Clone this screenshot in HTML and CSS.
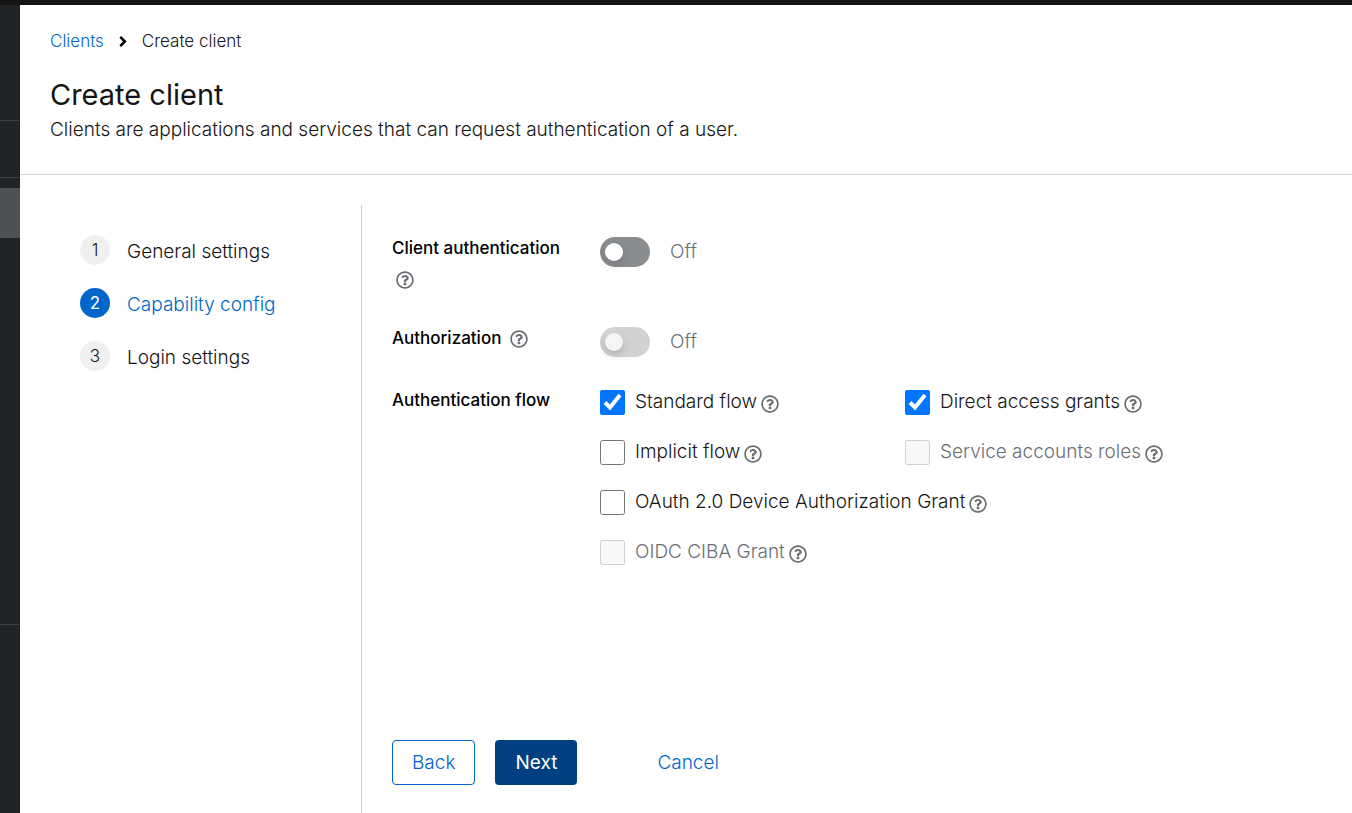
FILE: index.html
```html
<!DOCTYPE html>
<html lang="en">
<head>
<meta charset="utf-8">
<meta name="viewport" content="width=device-width, initial-scale=1">
<title>Create client</title>
<link rel="stylesheet" href="styles.css">
</head>
<body>
<svg class="sprite" aria-hidden="true">
  <symbol id="help" viewBox="0 0 512 512"><path d="M256 8C119.043 8 8 119.083 8 256c0 136.997 111.043 248 248 248s248-111.003 248-248C504 119.083 392.957 8 256 8zm0 448c-110.532 0-200-89.431-200-200 0-110.495 89.472-200 200-200 110.491 0 200 89.471 200 200 0 110.53-89.431 200-200 200zm107.244-255.2c0 67.052-72.421 68.084-72.421 92.863V300c0 6.627-5.373 12-12 12h-45.647c-6.627 0-12-5.373-12-12v-8.659c0-35.745 27.1-50.034 47.579-61.516 17.561-9.845 28.324-16.541 28.324-29.579 0-17.246-21.999-28.693-39.784-28.693-23.189 0-33.894 10.977-48.942 29.969-4.057 5.12-11.46 6.071-16.666 2.124l-27.824-21.098c-5.107-3.872-6.251-11.066-2.644-16.363C184.846 131.491 214.94 112 261.794 112c49.071 0 101.45 38.304 101.45 88.8zM298 368c0 23.159-18.841 42-42 42s-42-18.841-42-42 18.841-42 42-42 42 18.841 42 42z"/></symbol>
</svg>
<div class="topbar"></div>
<div class="shell">
  <aside class="sidebar">
    <div class="side-block side-block-first"></div>
    <div class="side-block side-block-second"></div>
    <div class="side-active"></div>
    <div class="side-block side-block-third"></div>
  </aside>
  <main class="page">
    <header class="page-header">
      <nav class="breadcrumb" aria-label="Breadcrumb">
        <a class="link" href="#clients">Clients</a>
        <svg class="chevron" viewBox="0 0 256 512" aria-hidden="true"><path d="M224.3 273l-136 136c-9.4 9.4-24.6 9.4-33.9 0l-22.6-22.6c-9.4-9.4-9.4-24.6 0-33.9l96.4-96.4-96.4-96.4c-9.4-9.4-9.4-24.6 0-33.9L54.3 103c9.4-9.4 24.6-9.4 33.9 0l136 136c9.5 9.4 9.5 24.6.1 34z"/></svg>
        <span>Create client</span>
      </nav>
      <h1 class="title">Create client</h1>
      <p class="subtitle">Clients are applications and services that can request authentication of a user.</p>
    </header>
    <div class="wizard">
      <nav class="steps" aria-label="Steps">
        <button class="step" type="button"><span class="step-number">1</span><span>General settings</span></button>
        <button class="step step-current" type="button" aria-current="step"><span class="step-number">2</span><span>Capability config</span></button>
        <button class="step" type="button"><span class="step-number">3</span><span>Login settings</span></button>
      </nav>
      <form class="content">
        <div class="fields">
          <div class="row row-tall">
            <div class="row-label"><label for="client-auth">Client authentication</label> <button class="help help-label" type="button" aria-label="Help for client authentication"><svg class="help-icon"><use href="#help"/></svg></button></div>
            <div class="switch-line"><input class="switch" id="client-auth" type="checkbox" role="switch"><span>Off</span></div>
          </div>
          <div class="row">
            <div class="row-label"><label for="authorization">Authorization</label> <button class="help help-label" type="button" aria-label="Help for authorization"><svg class="help-icon"><use href="#help"/></svg></button></div>
            <div class="switch-line"><input class="switch" id="authorization" type="checkbox" role="switch" disabled><span>Off</span></div>
          </div>
          <div class="row" role="group" aria-labelledby="flow-label">
            <div class="row-label" id="flow-label">Authentication flow</div>
            <div class="checks">
              <div class="check"><input class="box" id="standard" type="checkbox" checked><label for="standard">Standard flow</label><button class="help" type="button" aria-label="Help for standard flow"><svg class="help-icon"><use href="#help"/></svg></button></div>
              <div class="check"><input class="box" id="direct" type="checkbox" checked><label for="direct">Direct access grants</label><button class="help" type="button" aria-label="Help for direct access grants"><svg class="help-icon"><use href="#help"/></svg></button></div>
              <div class="check"><input class="box" id="implicit" type="checkbox"><label for="implicit">Implicit flow</label><button class="help" type="button" aria-label="Help for implicit flow"><svg class="help-icon"><use href="#help"/></svg></button></div>
              <div class="check check-disabled"><input class="box" id="service" type="checkbox" disabled><label for="service">Service accounts roles</label><button class="help" type="button" aria-label="Help for service accounts roles"><svg class="help-icon"><use href="#help"/></svg></button></div>
              <div class="check check-wide"><input class="box" id="device" type="checkbox"><label for="device">OAuth 2.0 Device Authorization Grant</label><button class="help" type="button" aria-label="Help for device authorization grant"><svg class="help-icon"><use href="#help"/></svg></button></div>
              <div class="check check-wide check-disabled"><input class="box" id="ciba" type="checkbox" disabled><label for="ciba">OIDC CIBA Grant</label><button class="help" type="button" aria-label="Help for OIDC CIBA grant"><svg class="help-icon"><use href="#help"/></svg></button></div>
            </div>
          </div>
        </div>
        <footer class="actions">
          <button class="btn btn-secondary" type="button">Back</button>
          <button class="btn btn-primary" type="button">Next</button>
          <button class="btn btn-link" type="button">Cancel</button>
        </footer>
      </form>
    </div>
  </main>
</div>
</body>
</html>
```
FILE: styles.css
```css
* {
  box-sizing: border-box;
}

body {
  margin: 0;
  min-height: 100vh;
  display: flex;
  flex-direction: column;
  background: #fff;
  color: #151515;
  font: 300 19px/30px Inter, "Open Sans", sans-serif;
}

button {
  padding: 0;
  border: 0;
  background: none;
  color: inherit;
  font: inherit;
  cursor: pointer;
}

.sprite {
  display: none;
}

.topbar {
  height: 5px;
  background: #151515;
}

.shell {
  flex: 1;
  display: flex;
}

.sidebar {
  flex: none;
  width: 20px;
  background: #212427;
}

.side-block {
  border-bottom: 1px solid #3c3f42;
}

.side-block-first {
  height: 116px;
}

.side-block-second {
  height: 57px;
  margin-bottom: 10px;
}

.side-active {
  height: 50px;
  background: #4f5255;
}

.side-block-third {
  height: 387px;
}

.page {
  flex: 1;
  min-width: 0;
  display: flex;
  flex-direction: column;
}

.page-header {
  padding: 24px 30px 29px;
  border-bottom: 1px solid #d2d2d2;
}

.breadcrumb {
  display: flex;
  align-items: center;
  font-size: 17px;
  line-height: 24px;
}

.link {
  color: #06c;
  text-decoration: none;
}

.chevron {
  width: 10px;
  height: 17px;
  margin: 0 14px;
}

.title {
  margin: 22px 0 0;
  font-size: 29px;
  font-weight: 400;
  line-height: 40px;
}

.subtitle {
  margin: 0;
}

.wizard {
  flex: 1;
  display: flex;
  padding-top: 30px;
}

.steps {
  flex: none;
  width: 342px;
  padding: 30px 30px 30px 60px;
  display: flex;
  flex-direction: column;
  gap: 20px;
  border-right: 1px solid #d2d2d2;
}

.step {
  display: flex;
  gap: 17px;
  line-height: 33px;
  text-align: left;
}

.step-number {
  width: 30px;
  height: 30px;
  border-radius: 50%;
  background: #f0f0f0;
  font-size: 17px;
  line-height: 30px;
  text-align: center;
}

.step-current {
  color: #06c;
}

.step-current .step-number {
  background: #06c;
  color: #fff;
  font-weight: 400;
}

.content {
  flex: 1;
  min-width: 0;
  display: flex;
  flex-direction: column;
  justify-content: space-between;
  padding: 30px 30px 28px;
}

.fields {
  display: flex;
  flex-direction: column;
  gap: 30px;
}

.row {
  display: grid;
  grid-template-columns: 178px minmax(0, 610px);
  gap: 30px;
}

.row-tall {
  min-height: 60px;
}

.row-label {
  font-size: 17px;
  font-weight: 500;
  line-height: 26px;
  color: #000;
}

.switch-line {
  display: flex;
  align-items: center;
  align-self: start;
  gap: 20px;
  padding-top: 2px;
  color: #6a6e73;
}

.switch {
  appearance: none;
  display: flex;
  align-items: center;
  width: 50px;
  height: 30px;
  margin: 0;
  padding: 0 5px;
  border-radius: 15px;
  background: #8a8d90;
}

.switch::before {
  content: "";
  width: 18px;
  height: 18px;
  border-radius: 50%;
  background: #fff;
  box-shadow: 0 4px 8px rgba(3, 3, 3, 0.16);
}

.switch:disabled {
  background: #d2d2d2;
}

.switch:disabled::before {
  background: #f5f5f5;
}

.checks {
  display: grid;
  grid-template-columns: 1fr 1fr;
  row-gap: 20px;
}

.check {
  display: flex;
  align-items: center;
}

.check-wide {
  grid-column: span 2;
}

.check-disabled label {
  color: #6a6e73;
}

.box {
  flex: none;
  width: 25px;
  height: 25px;
  margin: 0 10px 0 0;
}

.help {
  display: inline-flex;
  margin-left: 4px;
  padding-top: 3px;
  color: #6a6e73;
}

.help-label {
  padding: 0;
  vertical-align: middle;
}

.row-tall .help-label {
  margin-top: 10px;
}

.help-icon {
  width: 18px;
  height: 18px;
  fill: currentColor;
}

.actions {
  display: flex;
  gap: 20px;
}

.btn {
  height: 45px;
  padding: 0 19px;
  border: 1px solid transparent;
  border-radius: 4px;
}

.btn-secondary {
  border-color: #06c;
  color: #06c;
}

.btn-primary {
  background: #004080;
  color: #fff;
  font-weight: 400;
}

.btn-link {
  margin-left: 40px;
  color: #06c;
}
```
